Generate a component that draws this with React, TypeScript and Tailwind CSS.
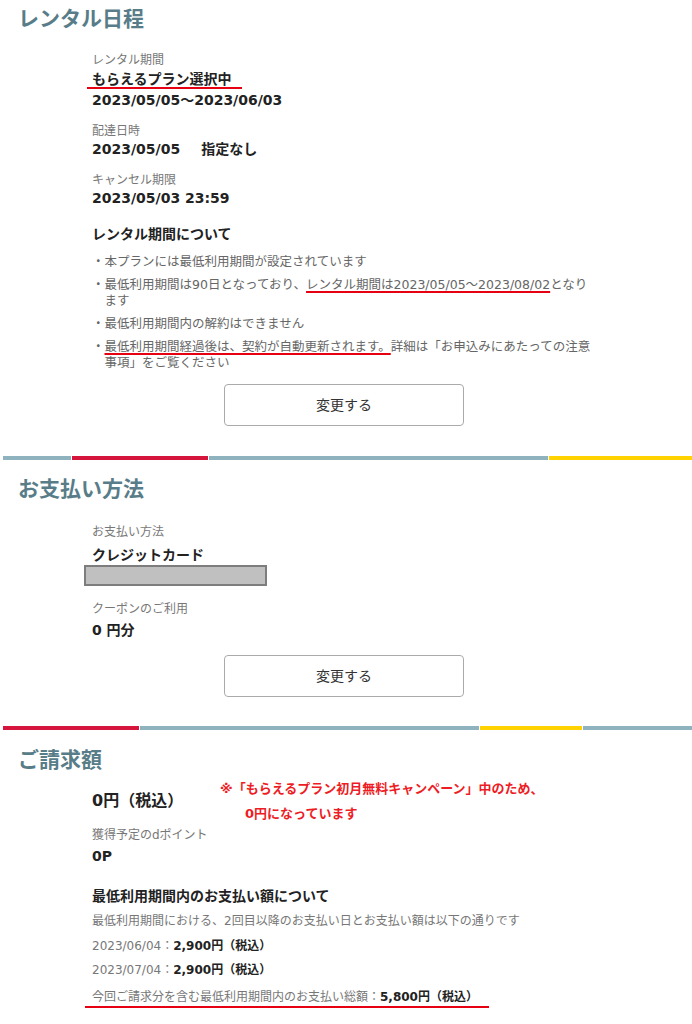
import * as React from "react";

const headingCls =
  "pl-[18px] text-[21px] font-bold leading-[30px] text-[#587d88]";
const labelCls = "text-[12px] leading-[18px] text-[#777]";
const valueCls = "text-[14px] font-bold leading-[18px] text-[#222]";

function ColorBar({ segments }: { segments: { w: string; c: string }[] }) {
  return (
    <div className="ml-[3px] flex h-[4px] gap-[1px]">
      {segments.map((s, i) => (
        <div key={i} className={`${s.w} ${s.c} h-full`} />
      ))}
    </div>
  );
}

function ChangeButton() {
  return (
    <div className="flex justify-center pr-[4px]">
      <button className="h-[42px] w-[240px] rounded-[4px] border border-[#aaa] bg-white text-[14px] text-[#333]">
        変更する
      </button>
    </div>
  );
}

export default function App() {
  return (
    <div className="w-[692px] bg-white pb-[20px] font-['DejaVu_Sans','Noto_Sans_CJK_JP',sans-serif] text-[#222]">
      {/* レンタル日程 */}
      <h2 className={`${headingCls} pt-[4px]`}>レンタル日程</h2>
      <div className="pl-[92px]">
        <div className="mt-[17px]">
          <p className={labelCls}>レンタル期間</p>
          <div className="mt-[2px]">
            <p className="-ml-[5px] mb-[2px] w-fit border-b-2 border-[#e60012] pl-[5px] pr-[10px] text-[14px] font-bold leading-[16px]">
              もらえるプラン選択中
            </p>
            <p className={valueCls}>2023/05/05〜2023/06/03</p>
          </div>
        </div>
        <div className="mt-[13px]">
          <p className={labelCls}>配達日時</p>
          <p className={valueCls}>
            2023/05/05<span className="ml-[21px]">指定なし</span>
          </p>
        </div>
        <div className="mt-[13px]">
          <p className={labelCls}>キャンセル期限</p>
          <p className={valueCls}>2023/05/03 23:59</p>
        </div>

        <p className={`${valueCls} mt-[18px]`}>レンタル期間について</p>
        <ul className="mt-[11px] flex flex-col gap-[7px] text-[12.5px] leading-[16px] text-[#666]">
          <li className="flex">
            <span className="w-[12.5px] shrink-0">・</span>
            <span>本プランには最低利用期間が設定されています</span>
          </li>
          <li className="flex">
            <span className="w-[12.5px] shrink-0">・</span>
            <span className="whitespace-nowrap">
              最低利用期間は90日となっており、
              <span className="underline decoration-[#e60012] decoration-2 underline-offset-[2px]">
                レンタル期間は2023/05/05〜2023/08/02
              </span>
              となり
              <br />
              ます
            </span>
          </li>
          <li className="flex">
            <span className="w-[12.5px] shrink-0">・</span>
            <span>最低利用期間内の解約はできません</span>
          </li>
          <li className="flex">
            <span className="w-[12.5px] shrink-0">・</span>
            <span className="whitespace-nowrap">
              <span className="underline decoration-[#e60012] decoration-2 underline-offset-[2px]">
                最低利用期間経過後は、契約が自動更新されます。
              </span>
              詳細は「お申込みにあたっての注意
              <br />
              事項」をご覧ください
            </span>
          </li>
        </ul>
      </div>
      <div className="mt-[13px]">
        <ChangeButton />
      </div>

      <div className="mt-[30px]">
        <ColorBar
          segments={[
            { w: "w-[68px]", c: "bg-[#8fb2bf]" },
            { w: "w-[136px]", c: "bg-[#d6153c]" },
            { w: "w-[339px]", c: "bg-[#8fb2bf]" },
            { w: "flex-1", c: "bg-[#ffd200]" },
          ]}
        />
      </div>

      {/* お支払い方法 */}
      <h2 className={`${headingCls} mt-[14px]`}>お支払い方法</h2>
      <div className="pl-[92px]">
        <p className={`${labelCls} mt-[19px]`}>お支払い方法</p>
        <p className={`${valueCls} mt-[5px]`}>クレジットカード</p>
        <div className="-ml-[8px] mt-[1px] h-[21px] w-[183px] border-2 border-[#7d7d7d] bg-[#c0c0c0]" />
        <p className={`${labelCls} mt-[14px]`}>クーポンのご利用</p>
        <p className={`${valueCls} mt-[3px]`}>0 円分</p>
      </div>
      <div className="mt-[16px]">
        <ChangeButton />
      </div>

      <div className="mt-[29px]">
        <ColorBar
          segments={[
            { w: "w-[136px]", c: "bg-[#d6153c]" },
            { w: "w-[339px]", c: "bg-[#8fb2bf]" },
            { w: "w-[102px]", c: "bg-[#ffd200]" },
            { w: "flex-1", c: "bg-[#8fb2bf]" },
          ]}
        />
      </div>

      {/* ご請求額 */}
      <h2 className={`${headingCls} mt-[15px]`}>ご請求額</h2>
      <div className="pl-[92px]">
        <div className="relative mt-[14px]">
          <p className="text-[16px] font-bold leading-[24px]">0円（税込）</p>
          <div className="absolute left-[128px] top-[-13px] whitespace-nowrap text-[13px] font-bold leading-[25px] text-[#ee1c25]">
            <p>※「もらえるプラン初月無料キャンペーン」中のため、</p>
            <p className="pl-[25px]">0円になっています</p>
          </div>
        </div>
        <p className={`${labelCls} mt-[13px]`}>獲得予定のdポイント</p>
        <p className={`${valueCls} mt-[3px]`}>0P</p>

        <p className={`${valueCls} mt-[22px]`}>
          最低利用期間内のお支払い額について
        </p>
        <p className={`${labelCls} mt-[7px]`}>
          最低利用期間における、2回目以降のお支払い日とお支払い額は以下の通りです
        </p>
        <p className={`${labelCls} mt-[7px]`}>
          2023/06/04：<span className="font-bold text-[#222]">2,900円（税込）</span>
        </p>
        <p className={`${labelCls} mt-[6px]`}>
          2023/07/04：<span className="font-bold text-[#222]">2,900円（税込）</span>
        </p>
        <p
          className={`${labelCls} -ml-[7px] mt-[9px] w-fit border-b-2 border-[#e60012] pl-[7px] pr-[11px]`}
        >
          今回ご請求分を含む最低利用期間内のお支払い総額：
          <span className="font-bold text-[#222]">5,800円（税込）</span>
        </p>
      </div>
    </div>
  );
}
